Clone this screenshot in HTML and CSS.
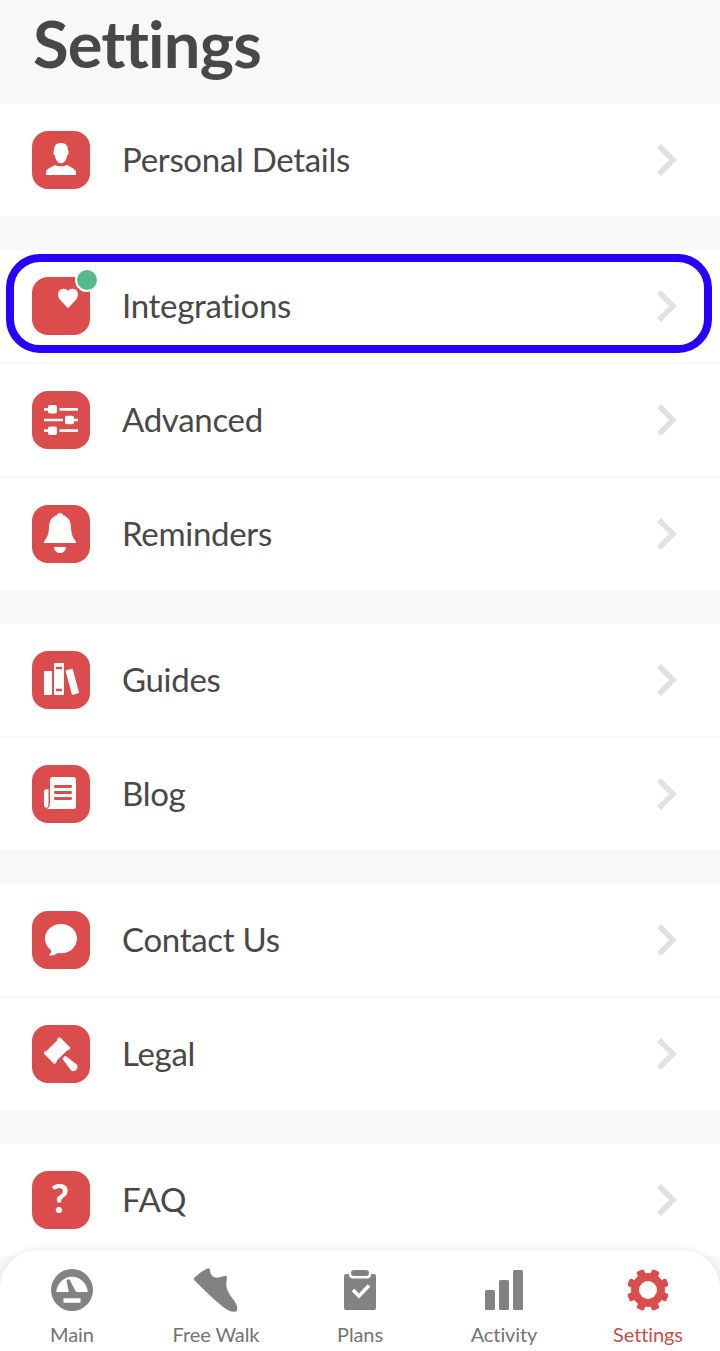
FILE: index.html
```
<!doctype html>
<html lang="en">
<head>
    <meta charset="UTF-8">
    <title>Settings</title>
    <link rel="stylesheet" href="styles.css">
</head>
<body>
<div class="app">
    <h1 class="title">Settings</h1>

    <div class="group">
        <div class="row">
            <svg class="tile" viewBox="0 0 58 58">
                <path d="M29 12c5 0 7.200 3 7 7.500 1.300 1 .6 4-.8 5C34.500 29 32 32.300 29 32.300s-5.500-3.300-6.200-7.800c-1.400-1-2.100-4-.8-5-.2-4.500 2-7.500 7-7.500z"/>
                <path d="M14 44v-2.500c0-3.500 4-4.500 9-7.500 3 1.700 9 1.700 12 0 5 3 9 4 9 7.500V44z"/>
            </svg>
            <span class="label">Personal Details</span>
            <svg class="chevron" viewBox="0 0 20 32"><path d="M2 2l14 14L2 30"/></svg>
        </div>
    </div>

    <div class="group">
        <div class="row selected">
            <div class="tile-box">
                <svg class="tile" viewBox="0 0 58 58">
                    <path d="M36 31.300L27.800 22.500C25 19 25.600 14 29 12.300c2.500-1.300 5.500-.5 7 1.700 1.500-2.200 4.500-3 7-1.700 3.400 1.700 4 6.700 1.200 10.200z"/>
                </svg>
                <span class="badge"></span>
            </div>
            <span class="label">Integrations</span>
            <svg class="chevron" viewBox="0 0 20 32"><path d="M2 2l14 14L2 30"/></svg>
        </div>
        <div class="row">
            <svg class="tile" viewBox="0 0 58 58">
                <path class="line" d="M12 18.300h6M27.500 18.300h18.500M12 29h19M40 29h6M12 39.700h6M27.500 39.700h18.500"/>
                <rect x="16" y="14" width="9" height="8.600" rx="2"/>
                <rect x="33" y="24.700" width="9" height="8.600" rx="2"/>
                <rect x="16" y="35.400" width="9" height="8.600" rx="2"/>
            </svg>
            <span class="label">Advanced</span>
            <svg class="chevron" viewBox="0 0 20 32"><path d="M2 2l14 14L2 30"/></svg>
        </div>
        <div class="row">
            <svg class="tile" viewBox="0 0 58 58">
                <path d="M28 8c2 0 3 1 3 2.300 4.500 1.300 7.500 5 7.800 9.700.4 7 .7 11 5.200 16.500V38H12v-1.500c4.500-5.500 4.800-9.500 5.200-16.500.3-4.700 3.300-8.400 7.800-9.700C25 9 26 8 28 8z"/>
                <path d="M22 42h12c0 3.500-2.500 6-6 6s-6-2.500-6-6z"/>
            </svg>
            <span class="label">Reminders</span>
            <svg class="chevron" viewBox="0 0 20 32"><path d="M2 2l14 14L2 30"/></svg>
        </div>
    </div>

    <div class="group">
        <div class="row">
            <svg class="tile" viewBox="0 0 58 58">
                <rect x="12" y="20" width="8" height="24" rx="1"/>
                <rect x="22" y="12" width="10" height="32" rx="1"/>
                <path class="cut" d="M24 17h6M24 39h6"/>
                <rect x="-3.700" y="-12.700" width="7.400" height="25.400" rx="1" transform="translate(40.300 30.800) rotate(-15)"/>
            </svg>
            <span class="label">Guides</span>
            <svg class="chevron" viewBox="0 0 20 32"><path d="M2 2l14 14L2 30"/></svg>
        </div>
        <div class="row">
            <svg class="tile" viewBox="0 0 58 58">
                <rect x="18" y="12" width="26" height="32" rx="2.500"/>
                <path d="M16.500 24v15c0 2-.5 3-2 4-1.500-.5-2.500-1.500-2.500-3V26.500c0-1.500 1-2.500 4.500-2.500z"/>
                <path d="M18 38c0 3-1 4-3 6h8v-6z"/>
                <path class="cut round" d="M23.300 21.500h15.400M23.300 27.500h15.400M23.300 33.500h15.400"/>
            </svg>
            <span class="label">Blog</span>
            <svg class="chevron" viewBox="0 0 20 32"><path d="M2 2l14 14L2 30"/></svg>
        </div>
    </div>

    <div class="group">
        <div class="row">
            <svg class="tile" viewBox="0 0 58 58">
                <ellipse cx="29" cy="27.600" rx="16" ry="14.700"/>
                <path d="M18 37c2 3 1 5-1 7.300 4 .7 7-.5 10-3z"/>
            </svg>
            <span class="label">Contact Us</span>
            <svg class="chevron" viewBox="0 0 20 32"><path d="M2 2l14 14L2 30"/></svg>
        </div>
        <div class="row">
            <svg class="tile" viewBox="0 0 58 58">
                <g transform="translate(25 25.500) rotate(-45)">
                    <rect x="-10" y="-7" width="20" height="14"/>
                    <rect x="-11.500" y="-8" width="4" height="16" rx="1.500"/>
                    <rect x="7.500" y="-8" width="4" height="16" rx="1.500"/>
                    <path d="M-1 9.500h2q1 0 1.200 1L4 23.500c.3 5-8.300 5-8 0l1.800-13q.2-1 1.200-1z"/>
                </g>
            </svg>
            <span class="label">Legal</span>
            <svg class="chevron" viewBox="0 0 20 32"><path d="M2 2l14 14L2 30"/></svg>
        </div>
    </div>

    <div class="group">
        <div class="row">
            <span class="tile question">?</span>
            <span class="label">FAQ</span>
            <svg class="chevron" viewBox="0 0 20 32"><path d="M2 2l14 14L2 30"/></svg>
        </div>
    </div>

    <nav class="tabs">
        <div class="tab">
            <svg class="tab-icon" viewBox="0 0 44 44">
                <circle cx="22" cy="22" r="21"/>
                <path class="hole" d="M6.200 24a15.900 17.300 0 0 1 31.600 0H26.500q-2.500-3-6.300-11.500c-.8-2.200-4-1.200-3.500 1L18.800 24zM13.500 30.300h17v4.400h-17z"/>
            </svg>
            <span>Main</span>
        </div>
        <div class="tab">
            <svg class="tab-icon" viewBox="0 0 44 44">
                <path d="M.5 9.500Q6.500 3.500 14 .3q1.800-.6 2 1.700c.3 4.500 2.500 6.800 5.700 7.500 4 .8 6-1.200 9.800-1.400 1.500 0 1.500 1 1.300 2.400-.8 5-.6 8.500 1 12.500 2.500 6 7.200 9 9 14.500.8 3.500.7 6-2 6.300-4 .2-8-1.800-12-5C20 31.500 10 22 1 13q-1.800-1.800-.5-3.500z"/>
            </svg>
            <span>Free Walk</span>
        </div>
        <div class="tab">
            <svg class="tab-icon" viewBox="0 0 44 44">
                <rect x="6" y="6" width="32" height="36" rx="2"/>
                <path class="hole" d="M11 4h22v2.500q0 4-4 4H15q-4 0-4-4z"/>
                <rect x="13" y="2" width="18" height="6" rx="3"/>
                <path class="check" d="M15 22l6 6 10-10.500"/>
            </svg>
            <span>Plans</span>
        </div>
        <div class="tab">
            <svg class="tab-icon" viewBox="0 0 44 44">
                <rect x="3" y="22" width="10" height="20" rx="1.500"/>
                <rect x="17" y="12" width="10" height="30" rx="1.500"/>
                <rect x="31" y="2" width="10" height="40" rx="1.500"/>
            </svg>
            <span>Activity</span>
        </div>
        <div class="tab active">
            <svg class="tab-icon" viewBox="-22 -22 44 44">
                <circle r="17"/>
                <rect x="-4" y="-21" width="8" height="42" rx="2" transform="rotate(22.500)"/>
                <rect x="-4" y="-21" width="8" height="42" rx="2" transform="rotate(67.500)"/>
                <rect x="-4" y="-21" width="8" height="42" rx="2" transform="rotate(112.500)"/>
                <rect x="-4" y="-21" width="8" height="42" rx="2" transform="rotate(157.500)"/>
                <circle class="hole" r="9"/>
            </svg>
            <span>Settings</span>
        </div>
    </nav>
</div>
</body>
</html>
```
FILE: styles.css
```
* {
    box-sizing: border-box;
}

body {
    margin: 0;
    background: #f8f8f8;
    color: #484848;
    font-family: Lato, "Liberation Sans", sans-serif;
    font-variant-ligatures: none;
}

.app {
    position: relative;
    height: 1351px;
    overflow: hidden;
}

.title {
    height: 104px;
    margin: 0;
    padding: 5px 33px 0;
    font-size: 65px;
    line-height: 76px;
    letter-spacing: -0.8px;
}

.group {
    display: grid;
    gap: 2px;
    margin-bottom: 34px;
}

.row {
    position: relative;
    display: flex;
    align-items: center;
    height: 112px;
    padding: 0 43px 0 32px;
    background: #fff;
}

.selected::after {
    content: "";
    position: absolute;
    top: 4px;
    right: 8px;
    bottom: 9px;
    left: 6px;
    border: 8px solid #2600ff;
    border-radius: 34px;
}

.tile {
    display: block;
    width: 58px;
    height: 58px;
    border-radius: 16px;
    background: #db4c4c;
    fill: #fff;
}

.tile-box {
    position: relative;
}

.badge {
    position: absolute;
    top: -9px;
    right: -9px;
    width: 24px;
    height: 24px;
    border: 2px solid #fff;
    border-radius: 50%;
    background: #56b987;
}

.line {
    stroke: #fff;
    stroke-width: 2.7;
}

.cut {
    stroke: #db4c4c;
    stroke-width: 2.4;
}

.round {
    stroke-width: 2.8;
    stroke-linecap: round;
}

.question {
    padding-right: 2px;
    color: #fff;
    font-size: 40px;
    font-weight: bold;
    line-height: 55px;
    text-align: center;
}

.label {
    flex: 1;
    margin-left: 32px;
    padding-bottom: 2px;
    font-size: 33px;
    letter-spacing: -0.3px;
}

.chevron {
    width: 20px;
    height: 32px;
    fill: none;
    stroke: #e1e1e1;
    stroke-width: 5.5;
}

.tabs {
    position: absolute;
    right: 0;
    bottom: 0;
    left: 0;
    display: flex;
    height: 101px;
    padding-top: 18px;
    border-radius: 38px 38px 0 0;
    background: #fff;
    box-shadow: 0 0 8px rgba(0, 0, 0, 0.1);
}

.tab {
    display: flex;
    flex: 1;
    flex-direction: column;
    align-items: center;
    gap: 10px;
    color: #737373;
    font-size: 20px;
    line-height: 24px;
    letter-spacing: -0.1px;
}

.tab-icon {
    width: 44px;
    height: 44px;
    fill: #828282;
}

.tab-icon .hole {
    fill: #fff;
}

.tab-icon .check {
    fill: none;
    stroke: #fff;
    stroke-width: 3.5;
}

.active {
    color: #c0504f;
}

.active .tab-icon {
    fill: #db4c4c;
}
```
